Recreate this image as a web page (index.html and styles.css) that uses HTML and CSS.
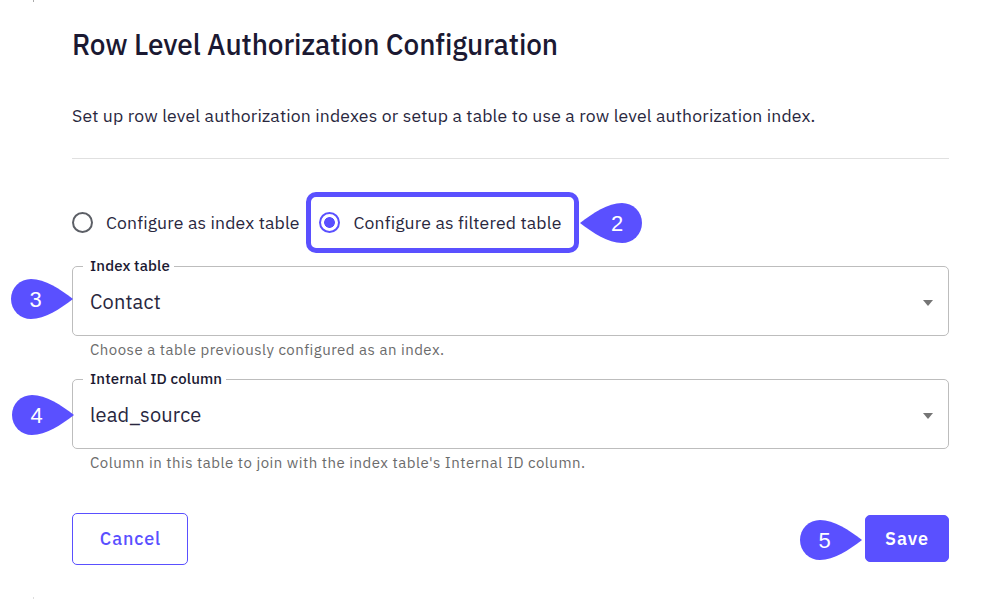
FILE: index.html
```html
<!DOCTYPE html>
<html lang="en">
<head>
<meta charset="utf-8">
<title>Row Level Authorization Configuration</title>
<link rel="stylesheet" href="styles.css">
</head>
<body>
<main class="dialog">
  <h1 class="title"><span>Row Level Authorization Configuration</span></h1>
  <p class="intro"><span>Set up row level authorization indexes or setup a table to use a row level authorization index.</span></p>

  <div class="options">
    <label class="option option-index"><i class="radio"></i><span>Configure as index table</span></label>
    <label class="option option-filtered"><i class="radio checked"></i><span>Configure as filtered table</span></label>
    <div class="pin pin-2">
      <svg viewBox="0 0 62 40"><path d="M0 20C13 10 28 0 42 0A20 20 0 0 1 42 40C28 40 13 30 0 20Z"/></svg>
      <b>2</b>
    </div>
  </div>

  <section class="field">
    <fieldset class="select">
      <legend class="label-index"><span>Index table</span></legend>
      <span class="value">Contact</span><i class="arrow"></i>
    </fieldset>
    <p class="helper">Choose a table previously configured as an index.</p>
    <div class="pin pin-3">
      <svg viewBox="0 0 62 40"><path d="M62 20C49 10 34 0 20 0A20 20 0 0 0 20 40C34 40 49 30 62 20Z"/></svg>
      <b>3</b>
    </div>
  </section>

  <section class="field">
    <fieldset class="select">
      <legend class="label-column"><span>Internal ID column</span></legend>
      <span class="value">lead_source</span><i class="arrow"></i>
    </fieldset>
    <p class="helper">Column in this table to join with the index table's Internal ID column.</p>
    <div class="pin pin-4">
      <svg viewBox="0 0 62 40"><path d="M62 20C49 10 34 0 20 0A20 20 0 0 0 20 40C34 40 49 30 62 20Z"/></svg>
      <b>4</b>
    </div>
  </section>

  <footer class="actions">
    <button class="cancel">Cancel</button>
    <button class="save">Save</button>
    <div class="pin pin-5">
      <svg viewBox="0 0 62 40"><path d="M62 20C49 10 34 0 20 0A20 20 0 0 0 20 40C34 40 49 30 62 20Z"/></svg>
      <b>5</b>
    </div>
  </footer>
</main>
</body>
</html>
```
FILE: styles.css
```css
* { box-sizing: border-box; }
body {
  margin: 0;
  background: #fff;
  color: #1b1932;
  font-family: "IBM Plex Sans", Roboto, "Liberation Sans", sans-serif;
  font-variant-ligatures: none;
}
.dialog {
  position: relative;
  height: 599px;
  padding: 25px 35px 0 72px;
  overflow: hidden;
}
.dialog::before, .dialog::after {
  content: "";
  position: absolute;
  left: 33px;
  width: 1px;
  height: 2px;
  background: #aaa;
}
.dialog::before { top: 0; }
.dialog::after { bottom: 0; background: #ddd; }
.title {
  margin: 0;
  font-size: 28px;
  font-weight: 500;
  line-height: 40px;
  letter-spacing: -0.1px;
  white-space: nowrap;
}
.title span {
  display: inline-block;
  transform: scaleY(1.05);
}
.intro {
  margin: 31px 0 0;
  height: 63px;
  border-bottom: 1px solid #e0e0e0;
  color: #29273e;
  font-size: 17.6px;
  line-height: 40px;
  letter-spacing: 0.165px;
  white-space: nowrap;
}
.options {
  position: relative;
  display: flex;
  align-items: center;
  height: 61px;
  margin-top: 33px;
}
.option {
  display: flex;
  align-items: center;
  gap: 13px;
  color: #29273e;
  font-size: 17.6px;
  line-height: 24px;
  letter-spacing: 0.165px;
  white-space: nowrap;
}
.option-index { width: 234px; }
.option-filtered {
  gap: 13.5px;
  width: 273px;
  height: 61px;
  padding-left: 8px;
  border: 5px solid #5a50ff;
  border-radius: 10px;
}
.radio {
  flex: none;
  width: 21px;
  height: 21px;
  border: 2px solid #5c5f66;
  border-radius: 50%;
}
.radio.checked {
  border-color: #5a50ff;
  background: radial-gradient(circle, #5a50ff 5px, transparent 5.7px);
}
.field {
  position: relative;
  height: 113px;
}
.options + .field { margin-top: 13px; }
.select {
  display: flex;
  align-items: center;
  justify-content: space-between;
  height: 70px;
  min-width: 0;
  margin: 0;
  padding: 4px 15px 0 10px;
  border: 1px solid #bdbdbd;
  border-radius: 5px;
}
.select legend {
  height: 1px;
  padding: 0 4px 0 7px;
  font-size: 15px;
  font-weight: 500;
  line-height: 1px;
  letter-spacing: 0.12px;
  white-space: nowrap;
}
.select legend span {
  display: block;
  margin-top: -1px;
}
.label-index { width: 91px; }
.label-column { width: 143px; }
.value {
  padding-left: 7px;
  margin-bottom: 2px;
  color: #29273e;
  font-size: 20px;
  line-height: 28px;
  letter-spacing: 0.15px;
}
.arrow {
  width: 10px;
  height: 6px;
  background: #757575;
  clip-path: polygon(0 0, 100% 0, 50% 100%);
}
.helper {
  margin: 4px 0 0 18px;
  color: #6b6b6b;
  font-size: 15px;
  line-height: 20px;
  letter-spacing: 0.49px;
  white-space: nowrap;
}
.actions {
  position: relative;
  display: flex;
  align-items: center;
  justify-content: space-between;
  height: 52px;
  margin-top: 21px;
}
button {
  padding: 0;
  border: 1px solid #5a50ff;
  border-radius: 5px;
  font: 500 18px/24px "IBM Plex Sans", Roboto, "Liberation Sans", sans-serif;
  letter-spacing: 0.9px;
}
.cancel { width: 116px; height: 52px; padding-left: 1px; background: #fff; color: #5a50ff; }
.save {
  width: 84px;
  height: 47px;
  margin-bottom: 1px;
  background: #5a50ff;
  color: #fff;
  font-weight: 600;
}
.pin {
  position: absolute;
  width: 62px;
  height: 40px;
  color: #fff;
}
.pin svg { display: block; width: 62px; height: 40px; fill: #5a50ff; }
.pin b {
  position: absolute;
  top: 0;
  left: 4.5px;
  width: 40px;
  font: 400 22px/41px "Liberation Sans", Arial, sans-serif;
  text-align: center;
}
.pin-2 { left: 508px; top: 11px; }
.pin-2 b { left: 17px; }
.pin-3 { left: -61px; top: 13px; }
.pin-4 { left: -60px; top: 16px; }
.pin-5 { right: 87px; top: 7px; }
```
